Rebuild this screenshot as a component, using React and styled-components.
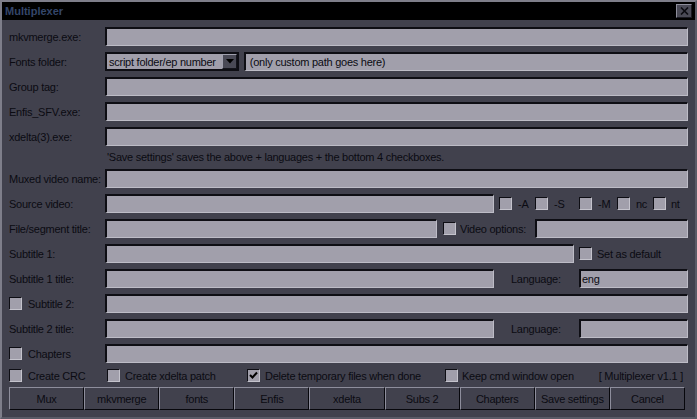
import React from "react";
import styled, { createGlobalStyle } from "styled-components";

const Global = createGlobalStyle`
  html, body { margin: 0; padding: 0; background: #41414d; }
  body { font-family: "Liberation Sans", Arial, sans-serif; }
  * { box-sizing: border-box; }
`;

const Window = styled.div`
  width: 697px;
  height: 419px;
  border: 2px solid;
  border-color: #7e7e8a #5a5a66 #5a5a66 #7e7e8a;
  background: #41414d;
  display: flex;
  flex-direction: column;
  font-size: 11px;
  letter-spacing: -0.25px;
  color: #0b0b12;
`;

const TitleBar = styled.div`
  height: 18px;
  background: #000;
  display: flex;
  align-items: center;
  justify-content: space-between;
  padding: 0 3px 0 3px;
`;

const Title = styled.span`
  font-weight: bold;
  font-size: 11px;
  letter-spacing: 0;
  color: #34466a;
`;

const CloseBtn = styled.div`
  width: 16px;
  height: 14px;
  background: #4a4a56;
  border: 1px solid;
  border-color: #8e8e9c #1a1a22 #1a1a22 #8e8e9c;
  display: flex;
  align-items: center;
  justify-content: center;
`;

const Body = styled.div`
  flex: 1;
  padding: 7px 7px 0 5px;
  display: flex;
  flex-direction: column;
`;

const Rows = styled.div`
  display: flex;
  flex-direction: column;
  gap: 6px;
`;

const Row = styled.div`
  display: flex;
  align-items: center;
  height: ${(p) => p.$h || 19}px;
`;

const Label = styled.div`
  width: ${(p) => p.$w || 98}px;
  flex: none;
  white-space: nowrap;
  padding-left: ${(p) => p.$pl || 0}px;
`;

const Field = styled.div`
  height: 19px;
  background: #a19fab;
  border-style: solid;
  border-width: 2px 1px 1px 2px;
  border-color: #0e0e14 #bdbcc6 #bdbcc6 #0e0e14;
  flex: ${(p) => (p.$w ? "none" : "1")};
  width: ${(p) => (p.$w ? `${p.$w}px` : "auto")};
  margin-left: ${(p) => p.$ml || 0}px;
  padding-left: 1px;
  display: flex;
  align-items: center;
  white-space: nowrap;
  overflow: hidden;
`;

const Select = styled.div`
  width: 134px;
  height: 19px;
  flex: none;
  background: #a19fab;
  border: 2px solid #0e0e14;
  display: flex;
  align-items: center;
  justify-content: space-between;
  padding-left: 2px;
  white-space: nowrap;
`;

const DropBtn = styled.div`
  width: 15px;
  height: 15px;
  background: #4a4a56;
  border: 1px solid;
  border-color: #a0a0ae #15151c #15151c #a0a0ae;
  display: flex;
  align-items: center;
  justify-content: center;
`;

const Note = styled.div`
  height: 11px;
  line-height: 11px;
  padding-left: 100px;
  white-space: nowrap;
`;

const Check = styled.label`
  display: flex;
  align-items: center;
  flex: none;
  width: ${(p) => (p.$w ? `${p.$w}px` : "auto")};
  margin-left: ${(p) => p.$ml || 0}px;
  white-space: nowrap;
`;

const Box = styled.span`
  width: 13px;
  height: 13px;
  flex: none;
  background: #a19fab;
  border-style: solid;
  border-width: 1px;
  border-color: #0e0e14 #c4c3cc #c4c3cc #0e0e14;
  margin-right: ${(p) => p.$gap ?? 6}px;
  display: flex;
  align-items: center;
  justify-content: center;
`;

const Plain = styled.div`
  flex: none;
  width: ${(p) => (p.$w ? `${p.$w}px` : "auto")};
  margin-left: ${(p) => p.$ml || 0}px;
  white-space: nowrap;
`;

const OptRow = styled.div`
  display: flex;
  align-items: center;
  height: 13px;
  margin-top: 6px;
  padding-left: 2px;
`;

const Version = styled.div`
  margin-left: auto;
  margin-right: 5px;
  white-space: nowrap;
`;

const ButtonBar = styled.div`
  display: grid;
  grid-template-columns: repeat(9, 1fr);
  width: 676px;
  margin-left: 2px;
  margin-top: 5px;
  height: 23px;
`;

const Btn = styled.div`
  border: 1px solid;
  border-color: #8e8e9c #07070c #07070c #8e8e9c;
  display: flex;
  align-items: center;
  justify-content: center;
  white-space: nowrap;
  background: #41414d;
`;

const Tick = () => (
  <svg width="9" height="9" viewBox="0 0 9 9">
    <path d="M1 4 L3.5 6.5 L8 1.5" stroke="#000" strokeWidth="2" fill="none" />
  </svg>
);

const Cb = ({ children, checked, w, ml, gap }) => (
  <Check $w={w} $ml={ml}>
    <Box $gap={gap}>{checked && <Tick />}</Box>
    {children}
  </Check>
);

export default function App() {
  const buttons = ["Mux", "mkvmerge", "fonts", "Enfis", "xdelta", "Subs 2", "Chapters", "Save settings", "Cancel"];
  return (
    <>
      <Global />
      <Window>
        <TitleBar>
          <Title>Multiplexer</Title>
          <CloseBtn>
            <svg width="9" height="8" viewBox="0 0 9 8">
              <path d="M1 0.5 L8 7.5 M8 0.5 L1 7.5" stroke="#0a0a10" strokeWidth="1.6" />
            </svg>
          </CloseBtn>
        </TitleBar>
        <Body>
          <Rows>
            <Row><Label $pl={2}>mkvmerge.exe:</Label><Field /></Row>
            <Row>
              <Label $pl={2}>Fonts folder:</Label>
              <Select>
                script folder/ep number
                <DropBtn>
                  <svg width="8" height="5" viewBox="0 0 8 5"><path d="M0 0 H8 L4 4.5 Z" fill="#000" /></svg>
                </DropBtn>
              </Select>
              <Field $ml={5}>&nbsp;(only custom path goes here)</Field>
            </Row>
            <Row><Label $pl={2}>Group tag:</Label><Field /></Row>
            <Row><Label $pl={2}>Enfis_SFV.exe:</Label><Field /></Row>
            <Row><Label $pl={2}>xdelta(3).exe:</Label><Field /></Row>
            <Note>'Save settings' saves the above + languages + the bottom 4 checkboxes.</Note>
            <Row><Label $pl={2}>Muxed video name:</Label><Field /></Row>
            <Row>
              <Label $pl={2}>Source video:</Label>
              <Field $w={389} />
              <Cb w={36} ml={5}>-A</Cb>
              <Cb w={44}>-S</Cb>
              <Cb w={38}>-M</Cb>
              <Cb w={36}>nc</Cb>
              <Cb gap={5}>nt</Cb>
            </Row>
            <Row>
              <Label $pl={2}>File/segment title:</Label>
              <Field $w={332} />
              <Cb w={92} ml={6} gap={4}>Video options:</Cb>
              <Field />
            </Row>
            <Row>
              <Label $pl={2}>Subtitle 1:</Label>
              <Field $w={469} />
              <Cb ml={5} gap={5}>Set as default</Cb>
            </Row>
            <Row>
              <Label $pl={2}>Subtitle 1 title:</Label>
              <Field $w={389} />
              <Plain $w={68} $ml={17}>Language:</Plain>
              <Field>eng</Field>
            </Row>
            <Row>
              <Label $pl={2}><Cb gap={6}>Subtitle 2:</Cb></Label>
              <Field />
            </Row>
            <Row>
              <Label $pl={2}>Subtitle 2 title:</Label>
              <Field $w={389} />
              <Plain $w={68} $ml={17}>Language:</Plain>
              <Field />
            </Row>
            <Row>
              <Label $pl={2}><Cb gap={6}>Chapters</Cb></Label>
              <Field />
            </Row>
          </Rows>
          <OptRow>
            <Cb w={98} gap={6}>Create CRC</Cb>
            <Cb w={140} gap={5}>Create xdelta patch</Cb>
            <Cb w={198} gap={5} checked>Delete temporary files when done</Cb>
            <Cb gap={4}>Keep cmd window open</Cb>
            <Version>[ Multiplexer v1.1 ]</Version>
          </OptRow>
          <ButtonBar>
            {buttons.map((b) => (
              <Btn key={b}>{b}</Btn>
            ))}
          </ButtonBar>
        </Body>
      </Window>
    </>
  );
}
